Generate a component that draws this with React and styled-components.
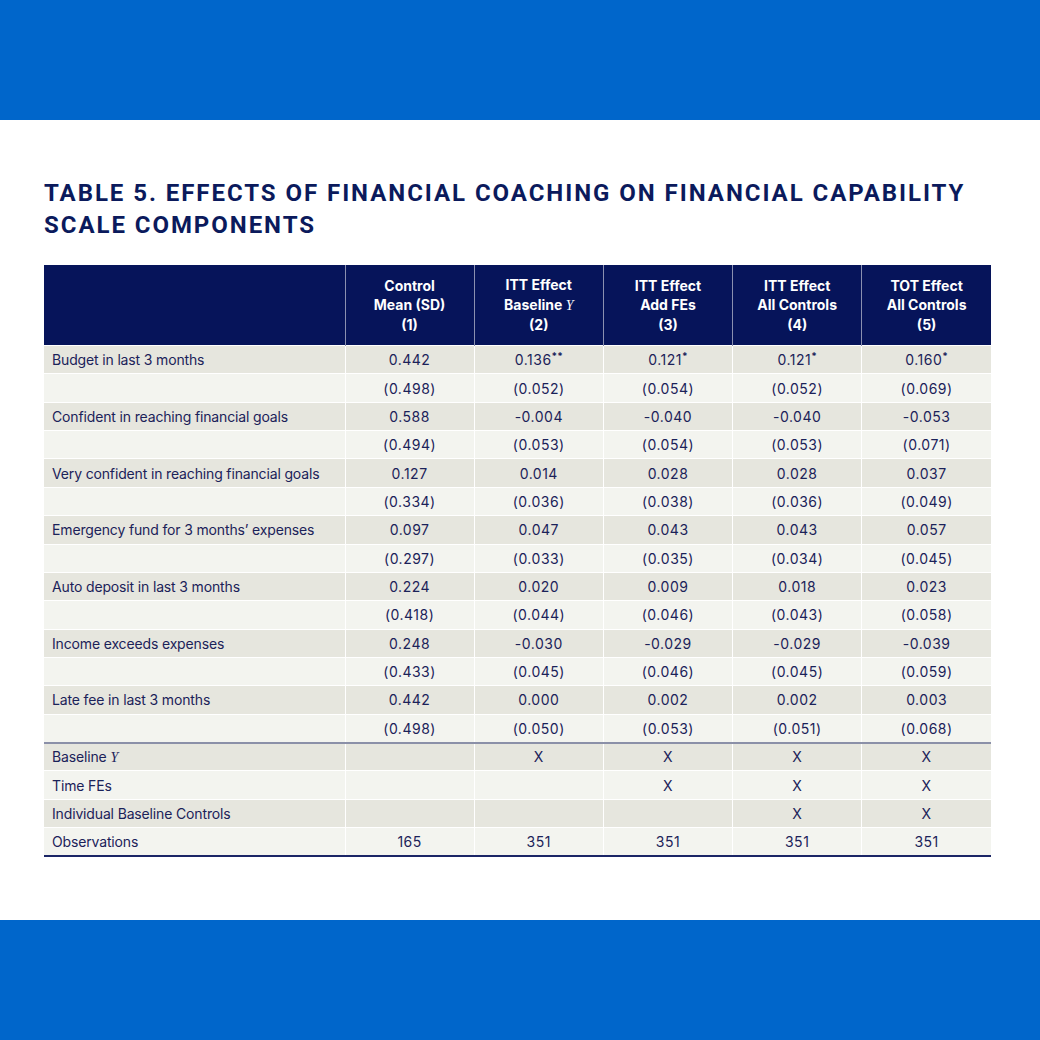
import React from 'react';
import styled, { createGlobalStyle } from 'styled-components';

const GlobalStyle = createGlobalStyle`
  html, body {
    margin: 0;
    padding: 0;
    background: #ffffff;
  }
  body {
    font-family: Inter, Roboto, "Liberation Sans", sans-serif;
  }
`;

const Page = styled.div`
  width: 1040px;
  height: 1040px;
  display: flex;
  flex-direction: column;
`;

const Band = styled.div`
  height: 120px;
  flex: none;
  background-color: #0066cb;
`;

const Content = styled.main`
  flex: 1;
  padding: 57px 0 0 44px;
  box-sizing: border-box;
`;

const Title = styled.h1`
  margin: 0 0 24px;
  width: 960px;
  font-family: Roboto, "Liberation Sans", sans-serif;
  font-weight: 700;
  font-size: 24px;
  line-height: 32px;
  letter-spacing: 1.95px;
  color: #0b1a5c;
  text-transform: uppercase;
`;

const Table = styled.table`
  width: 947px;
  border-collapse: collapse;
  table-layout: fixed;
  font-size: 14px;
  color: #1b2259;
`;

const HeadCell = styled.th`
  background-color: #06145a;
  color: #ffffff;
  font-weight: 700;
  font-size: 14px;
  line-height: 19.5px;
  height: 80px;
  padding: 0 4px;
  text-align: center;
  vertical-align: middle;
  border-left: 1px solid #8a90b0;
  &:first-child {
    border-left: none;
  }
`;

const Row = styled.tr`
  background-color: ${(p) => (p.$shade ? '#e6e6de' : '#f3f4ef')};
  border-bottom: ${(p) => (p.$last ? '2px solid #1b2566' : 'none')};
`;

const Cell = styled.td`
  height: 28.36px;
  padding: 0 8px;
  box-sizing: border-box;
  text-align: ${(p) => (p.$label ? 'left' : 'center')};
  letter-spacing: ${(p) => (p.$label ? '-0.15px' : '0.5px')};
  vertical-align: middle;
  border-left: 1px solid #ffffff;
  border-top: ${(p) => (p.$divider ? '2px solid #8b90a8' : '1px solid #ffffff')};
  &:first-child {
    border-left: none;
  }
`;

const Star = styled.sup`
  font-size: 10px;
  font-weight: 700;
  line-height: 0;
  letter-spacing: 0;
  vertical-align: 5px;
`;

const MathY = styled.i`
  font-family: "Liberation Serif", serif;
  font-style: italic;
  font-weight: 400;
`;

const columns = [
  ['Control', 'Mean (SD)', '(1)'],
  ['ITT Effect', <>Baseline <MathY>Y</MathY></>, '(2)'],
  ['ITT Effect', 'Add FEs', '(3)'],
  ['ITT Effect', 'All Controls', '(4)'],
  ['TOT Effect', 'All Controls', '(5)'],
];

const outcomes = [
  {
    label: 'Budget in last 3 months',
    est: ['0.442', ['0.136', '**'], ['0.121', '*'], ['0.121', '*'], ['0.160', '*']],
    se: ['0.498', '0.052', '0.054', '0.052', '0.069'],
  },
  {
    label: 'Confident in reaching financial goals',
    est: ['0.588', '-0.004', '-0.040', '-0.040', '-0.053'],
    se: ['0.494', '0.053', '0.054', '0.053', '0.071'],
  },
  {
    label: 'Very confident in reaching financial goals',
    est: ['0.127', '0.014', '0.028', '0.028', '0.037'],
    se: ['0.334', '0.036', '0.038', '0.036', '0.049'],
  },
  {
    label: 'Emergency fund for 3 months\u2019 expenses',
    est: ['0.097', '0.047', '0.043', '0.043', '0.057'],
    se: ['0.297', '0.033', '0.035', '0.034', '0.045'],
  },
  {
    label: 'Auto deposit in last 3 months',
    est: ['0.224', '0.020', '0.009', '0.018', '0.023'],
    se: ['0.418', '0.044', '0.046', '0.043', '0.058'],
  },
  {
    label: 'Income exceeds expenses',
    est: ['0.248', '-0.030', '-0.029', '-0.029', '-0.039'],
    se: ['0.433', '0.045', '0.046', '0.045', '0.059'],
  },
  {
    label: 'Late fee in last 3 months',
    est: ['0.442', '0.000', '0.002', '0.002', '0.003'],
    se: ['0.498', '0.050', '0.053', '0.051', '0.068'],
  },
];

const footRows = [
  { label: <>Baseline <MathY>Y</MathY></>, values: ['', 'X', 'X', 'X', 'X'] },
  { label: 'Time FEs', values: ['', '', 'X', 'X', 'X'] },
  { label: 'Individual Baseline Controls', values: ['', '', '', 'X', 'X'] },
  { label: 'Observations', values: ['165', '351', '351', '351', '351'] },
];

const renderValue = (v) =>
  Array.isArray(v) ? (
    <>
      {v[0]}
      <Star>{v[1]}</Star>
    </>
  ) : (
    v
  );

export default function App() {
  return (
    <>
      <GlobalStyle />
      <Page>
        <Band />
        <Content>
          <Title>
            Table 5. Effects of Financial Coaching on Financial Capability
            Scale Components
          </Title>
          <Table>
            <colgroup>
              <col style={{ width: 301 }} />
              <col />
              <col />
              <col />
              <col />
              <col />
            </colgroup>
            <thead>
              <tr>
                <HeadCell />
                {columns.map((c, i) => (
                  <HeadCell key={i}>
                    {c[0]}
                    <br />
                    {c[1]}
                    <br />
                    {c[2]}
                  </HeadCell>
                ))}
              </tr>
            </thead>
            <tbody>
              {outcomes.map((o) => (
                <React.Fragment key={o.label}>
                  <Row $shade>
                    <Cell $label>{o.label}</Cell>
                    {o.est.map((v, i) => (
                      <Cell key={i}>{renderValue(v)}</Cell>
                    ))}
                  </Row>
                  <Row>
                    <Cell $label />
                    {o.se.map((v, i) => (
                      <Cell key={i}>({v})</Cell>
                    ))}
                  </Row>
                </React.Fragment>
              ))}
              {footRows.map((r, idx) => (
                <Row
                  key={idx}
                  $shade={idx % 2 === 0}
                  $last={idx === footRows.length - 1}
                >
                  <Cell $label $divider={idx === 0}>
                    {r.label}
                  </Cell>
                  {r.values.map((v, i) => (
                    <Cell key={i} $divider={idx === 0}>
                      {v}
                    </Cell>
                  ))}
                </Row>
              ))}
            </tbody>
          </Table>
        </Content>
        <Band />
      </Page>
    </>
  );
}
